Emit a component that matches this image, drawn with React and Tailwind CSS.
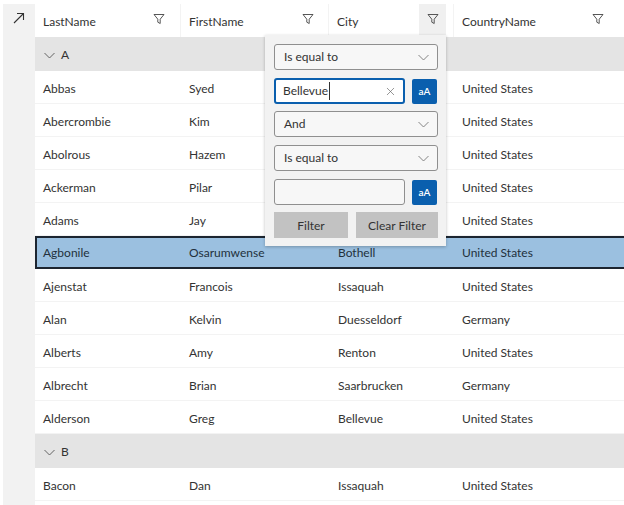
import { X } from "lucide-react";

const rows = [
  ["Abbas", "Syed", "", "United States"],
  ["Abercrombie", "Kim", "", "United States"],
  ["Abolrous", "Hazem", "", "United States"],
  ["Ackerman", "Pilar", "", "United States"],
  ["Adams", "Jay", "", "United States"],
  ["Agbonile", "Osarumwense", "Bothell", "United States"],
  ["Ajenstat", "Francois", "Issaquah", "United States"],
  ["Alan", "Kelvin", "Duesseldorf", "Germany"],
  ["Alberts", "Amy", "Renton", "United States"],
  ["Albrecht", "Brian", "Saarbrucken", "Germany"],
  ["Alderson", "Greg", "Bellevue", "United States"],
];

function FilterIcon() {
  return (
    <svg width="12" height="12" viewBox="0 0 12 12" fill="none" stroke="#444" strokeWidth="0.9">
      <path d="M1 1.5h10L7.2 6.2v4.3L4.8 9.2v-3z" />
    </svg>
  );
}

function Chevron({ color = "#555", size = 13 }) {
  return (
    <svg width={size} height={size} viewBox="0 0 13 13" fill="none" stroke={color} strokeWidth="0.9">
      <path d="M1.5 4l5 5 5-5" />
    </svg>
  );
}

function Cells({ row, first = "w-[146px] pl-[8px]" }) {
  return (
    <>
      <div className={first}>{row[0]}</div>
      <div className="w-[149px] pl-[8px]">{row[1]}</div>
      <div className="w-[124px] pl-[8px]">{row[2]}</div>
      <div className="pl-[8px]">{row[3]}</div>
    </>
  );
}

function Row({ row }) {
  const selected = row[0] === "Agbonile";
  if (selected) {
    return (
      <div className="flex h-[33px] items-center bg-[#9bc0e0] border-y-2 border-l-2 border-[#1c2530] pt-[1px] text-[#22303c]">
        <Cells row={row} first="w-[144px] pl-[6px]" />
      </div>
    );
  }
  return (
    <div className="flex h-[33px] items-center border-b border-[#f3f3f3] pt-[3px]">
      <Cells row={row} />
    </div>
  );
}

function Group({ label }) {
  return (
    <div className="flex h-[34px] items-center gap-[5px] bg-[#e4e4e4] pl-[8px] pt-[2px]">
      <Chevron />
      <span>{label}</span>
    </div>
  );
}

function Select({ label }) {
  return (
    <div className="flex h-[26px] w-[164px] items-center justify-between rounded-[3px] border border-[#8f8f8f] bg-[#f7f7f7] pl-[9px] pr-[7px]">
      <span>{label}</span>
      <Chevron color="#777" />
    </div>
  );
}

function CaseButton() {
  return (
    <div className="flex h-[25px] w-[25px] items-center justify-center rounded-[2px] bg-[#0a5fae] text-[10px] font-semibold text-white">
      aA
    </div>
  );
}

function HeaderCell({ title, width, pad = "pl-[8px]", line = true, mr = "mr-[15px]" }) {
  return (
    <div className={`flex h-full items-center justify-between ${width} ${pad} ${line ? "border-r border-[#f3f3f3]" : ""}`}>
      <span className="mt-[2px]">{title}</span>
      <span className={`mb-[4px] ${mr}`}><FilterIcon /></span>
    </div>
  );
}

export default function App() {
  return (
    <div className="relative flex h-[505px] w-[624px] overflow-hidden bg-white pl-[3px] pt-[4px] text-[12px] text-[#333] font-['Lato',sans-serif]">
      {/* Left rail */}
      <div className="w-[32px] shrink-0 bg-[#f2f2f2] pl-[10px] pt-[8px]">
        <svg width="12" height="12" viewBox="0 0 12 12" fill="none" stroke="#333" strokeWidth="1.1">
          <path d="M1 11L10.5 1.5M4 1.5h6.5V8" />
        </svg>
      </div>

      <div className="flex-1">
        {/* Header */}
        <div className="flex h-[33px] items-center">
          <HeaderCell title="LastName" width="w-[146px]" />
          <HeaderCell title="FirstName" width="w-[148px]" mr="mr-[14px]" />
          <div className="flex h-full w-[125px] items-center justify-between border-r border-[#f3f3f3] pl-[8px]">
            <span className="mt-[2px]">City</span>
            <div className="flex h-[31px] w-[27px] items-start justify-center self-start bg-[#f0f0f0] pt-[9px] mr-[7px]">
              <FilterIcon />
            </div>
          </div>
          <div className="flex-1 h-full">
            <HeaderCell title="CountryName" width="w-full" line={false} mr="mr-[20px]" />
          </div>
        </div>

        <Group label="A" />
        {rows.map((r) => (
          <Row key={r[0]} row={r} />
        ))}
        <Group label="B" />
        <Row row={["Bacon", "Dan", "Issaquah", "United States"]} />
      </div>

      {/* Filter popup */}
      <div className="absolute left-[265px] top-[35px] flex h-[211px] w-[181px] flex-col bg-[#f2f2f2] pl-[9px] pt-[9px] shadow-[0_1px_3px_rgba(0,0,0,0.25)]">
        <Select label="Is equal to" />
        <div className="mt-[8px] flex w-[163px] items-center justify-between">
          <div className="flex h-[26px] w-[131px] items-center justify-between rounded-[3px] border-2 border-[#0a5fae] bg-white pl-[7px] pr-[6px]">
            <span className="border-r border-[#333] pr-[0.5px]">Bellevue</span>
            <X size={13} color="#666" strokeWidth={1.25} />
          </div>
          <CaseButton />
        </div>
        <div className="mt-[7px]"><Select label="And" /></div>
        <div className="mt-[8px]"><Select label="Is equal to" /></div>
        <div className="mt-[8px] flex w-[163px] items-center justify-between">
          <div className="h-[26px] w-[131px] rounded-[3px] border border-[#8f8f8f] bg-[#f7f7f7]" />
          <CaseButton />
        </div>
        <div className="mt-[7px] flex w-[164px] justify-between">
          <div className="flex h-[26px] w-[74px] items-center justify-center bg-[#c2c2c2] pt-[2px]">Filter</div>
          <div className="flex h-[26px] w-[82px] items-center justify-center bg-[#c2c2c2] pt-[2px]">Clear Filter</div>
        </div>
      </div>
    </div>
  );
}
